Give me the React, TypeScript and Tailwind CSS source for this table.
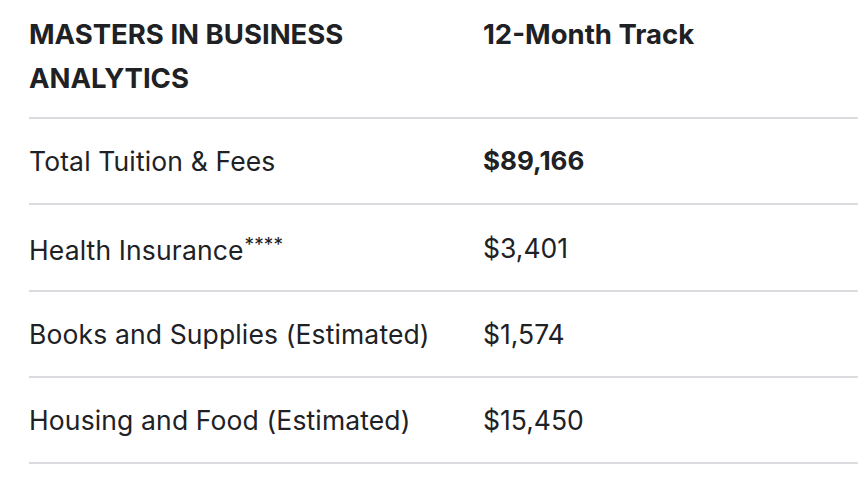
import React from 'react'

const rows = [
  { label: 'Total Tuition & Fees', value: '$89,166', bold: true, h: 'h-[86px]' },
  { label: 'Health Insurance', sup: '****', value: '$3,401', h: 'h-[87px]' },
  { label: 'Books and Supplies (Estimated)', value: '$1,574', h: 'h-[86px]' },
  { label: 'Housing and Food (Estimated)', value: '$15,450', h: 'h-[86px]' },
]

export default function App() {
  return (
    <main className="min-h-screen bg-white pl-[29px] text-[#202124] font-['Inter',sans-serif]">
      {/* header */}
      <div className="grid grid-cols-[454px_1fr] h-[119px] border-b-2 border-[#dadce0] pt-[12px]">
        <div className="text-[27.5px] leading-[44px] font-bold w-[340px]">
          MASTERS IN BUSINESS ANALYTICS
        </div>
        <div className="text-[27.5px] leading-[44px] font-bold">12-Month Track</div>
      </div>

      {rows.map((r) => (
        <div
          key={r.label}
          className={`grid grid-cols-[454px_1fr] items-center border-b-2 border-[#dadce0] ${r.h}`}
        >
          <div className={`text-[26.5px] leading-8 tracking-[0.005em] ${r.sup ? 'pt-[5px]' : ''}`}>
            {r.label}
            {r.sup && <sup className="text-[19px] relative -top-[9px] ml-[1px]">{r.sup}</sup>}
          </div>
          <div className={`leading-8 ${r.bold ? 'text-[26px] font-bold' : 'text-[26.5px]'}`}>
            {r.value}
          </div>
        </div>
      ))}
    </main>
  )
}
